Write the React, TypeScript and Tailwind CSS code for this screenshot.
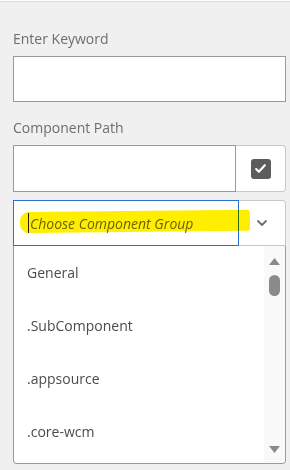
import React from 'react';

const groups = ['General', '.SubComponent', '.appsource', '.core-wcm'];

const Label = ({ text }: { text: string }) => (
  <p className="text-[14px] leading-5 text-[#6e6e6e]">{text}</p>
);

const App: React.FC = () => {
  return (
    <div
      className="w-[290px] h-[470px] bg-[#f0f0f0] border-t border-[#dadada] mt-px overflow-hidden"
      style={{ fontFamily: '"Open Sans", "Noto Sans", sans-serif' }}
    >
      <div className="pl-[13px] pr-[4px] pt-[27px]">
        {/* Keyword */}
        <Label text="Enter Keyword" />
        <div className="mt-[7px] h-[46px] bg-white border border-[#9a9a9a]" />

        {/* Component path */}
        <div className="mt-[16px]">
          <Label text="Component Path" />
        </div>
        <div className="mt-[7px] flex h-[47px]">
          <div className="flex-1 bg-white border border-[#9a9a9a]" />
          <div className="w-[50px] bg-white border border-l-0 border-[#c8c8c8] rounded-r-[4px] flex items-center justify-center">
            <span className="w-[20px] h-[20px] rounded-[3px] bg-[#5c5c5c] flex items-center justify-center">
              <svg width="13" height="13" viewBox="0 0 24 24" fill="none" stroke="white" strokeWidth="4" strokeLinecap="round" strokeLinejoin="round">
                <path d="M4 13l5 5L20 6" />
              </svg>
            </span>
          </div>
        </div>

        {/* Group select */}
        <div className="relative mt-[8px] flex h-[46px]">
          <div className="flex-1 bg-white border border-[#2d6fd2] flex items-center pl-[14px]">
            <span className="w-px h-[20px] bg-[#222] mr-px" />
            <span className="italic text-[14px] text-[#6a6a6a]">Choose Component Group</span>
          </div>
          <div className="w-[47px] bg-white border border-l-0 border-[#c8c8c8] rounded-tr-[4px] flex items-center justify-center">
            <svg width="12" height="8" viewBox="0 0 12 8" fill="none" stroke="#6e6e6e" strokeWidth="1.8" strokeLinecap="round" strokeLinejoin="round">
              <path d="M2 2l4 4 4-4" />
            </svg>
          </div>
          {/* marker highlight */}
          <div className="absolute z-10 left-[7px] top-[11px] w-[230px] h-[21px] bg-[#ffee00] rounded-l-[9px] rounded-r-[3px] -rotate-[0.6deg] mix-blend-multiply pointer-events-none" />
        </div>

        {/* Dropdown list */}
        <div className="flex h-[218px] bg-white border border-t-0 border-[#9a9a9a] rounded-b-[4px] overflow-hidden">
          <div className="flex-1">
            {groups.map((g) => (
              <div key={g} className="h-[53px] flex items-center pl-[13px] text-[14px] text-[#4b4b4b]">
                {g}
              </div>
            ))}
          </div>
          <div className="w-[21px] bg-[#f9f9f9] flex flex-col items-center pt-[12px] pb-[10px]">
            <svg width="11" height="7" viewBox="0 0 11 7">
              <path d="M5.5 0L11 7H0z" fill="#8a8a8a" />
            </svg>
            <div className="mt-[10px] w-[11px] h-[21px] rounded-full bg-[#8a8a8a]" />
            <div className="flex-1" />
            <svg width="11" height="7" viewBox="0 0 11 7">
              <path d="M0 0h11L5.5 7z" fill="#8a8a8a" />
            </svg>
          </div>
        </div>
      </div>
    </div>
  );
};

export default App;
